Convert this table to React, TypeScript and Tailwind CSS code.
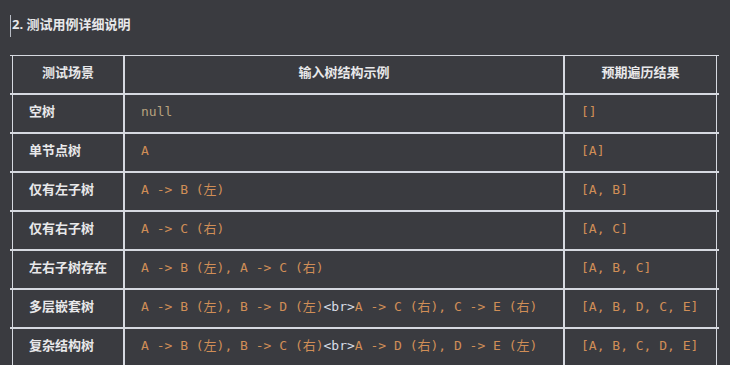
import React from "react";

const codeFont = { fontFamily: '"DejaVu Sans Mono", "Noto Sans CJK SC", monospace' };
const cjkFont = { fontFamily: '"Noto Sans", "Noto Sans CJK SC", sans-serif' };

type Seg = { t: string; br?: boolean };
const rows: { name: string; input: Seg[]; out: string; nullish?: boolean }[] = [
  { name: "空树", input: [{ t: "null" }], out: "[]", nullish: true },
  { name: "单节点树", input: [{ t: "A" }], out: "[A]" },
  { name: "仅有左子树", input: [{ t: "A -> B (左)" }], out: "[A, B]" },
  { name: "仅有右子树", input: [{ t: "A -> C (右)" }], out: "[A, C]" },
  { name: "左右子树存在", input: [{ t: "A -> B (左), A -> C (右)" }], out: "[A, B, C]" },
  {
    name: "多层嵌套树",
    input: [{ t: "A -> B (左), B -> D (左)" }, { t: "<br>", br: true }, { t: "A -> C (右), C -> E (右)" }],
    out: "[A, B, D, C, E]",
  },
  {
    name: "复杂结构树",
    input: [{ t: "A -> B (左), B -> C (右)" }, { t: "<br>", br: true }, { t: "A -> D (右), D -> E (左)" }],
    out: "[A, B, C, D, E]",
  },
];

export default function App() {
  return (
    <div className="w-[730px] h-[365px] overflow-hidden bg-[#3a3b40] text-[#e8e8ea]" style={cjkFont}>
      <div className="pt-[15px]">
        <div className="ml-[10px] h-[22px] border-l border-[#b8bcc4] pl-[1px] text-[13px] font-bold leading-[18px]">
          2. 测试用例详细说明
        </div>
      </div>
      <div className="ml-[10px] mt-[18px] w-[709px]">
        <div className="border-t border-[#d6d9e0] px-[2px]">
          <div className="flex h-[37px] text-[13px] font-bold">
            <div className="w-[111px] border-l border-[#d6d9e0] flex items-center justify-center pb-[3px]">测试场景</div>
            <div className="w-[440px] border-l-2 border-[#d6d9e0] flex items-center justify-center pb-[3px]">输入树结构示例</div>
            <div className="w-[154px] border-l-2 border-r border-[#d6d9e0] flex items-center justify-center pb-[3px]">预期遍历结果</div>
          </div>
        </div>
        {rows.map((r) => (
          <div key={r.name} className="border-t-2 border-[#d6d9e0] px-[2px]">
            <div className="flex h-[37px]">
              <div className="w-[111px] border-l border-[#d6d9e0] flex items-center pl-4 pb-[3px] text-[13px] font-bold">
                {r.name}
              </div>
              <div
                className={`w-[440px] border-l-2 border-[#d6d9e0] flex items-center pl-4 pb-[3px] text-[13px] whitespace-pre ${
                  r.nullish ? "text-[#b7a27e]" : "text-[#d08e57]"
                }`}
                style={codeFont}
              >
                {r.input.map((s, i) => (
                  <span key={i} className={s.br ? "text-[#d8dde6]" : ""}>
                    {s.t}
                  </span>
                ))}
              </div>
              <div
                className="w-[154px] border-l-2 border-r border-[#d6d9e0] flex items-center pl-4 pb-[3px] text-[13px] whitespace-pre text-[#d08e57]"
                style={codeFont}
              >
                {r.out}
              </div>
            </div>
          </div>
        ))}
      </div>
    </div>
  );
}
